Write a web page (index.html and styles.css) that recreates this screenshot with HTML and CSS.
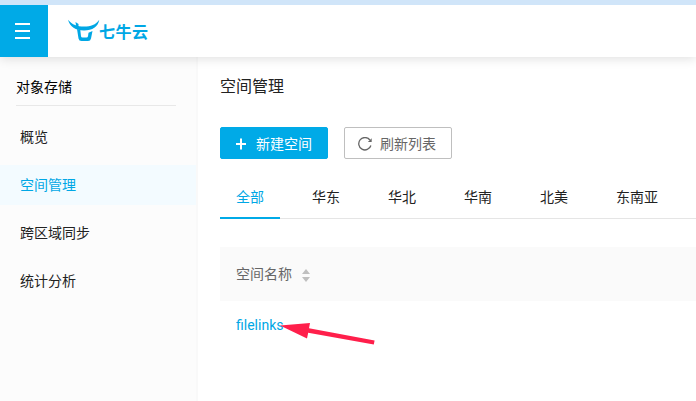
FILE: index.html
```html
<!DOCTYPE html>
<html lang="zh-CN">
<head>
<meta charset="utf-8">
<title>空间管理</title>
<link rel="stylesheet" href="styles.css">
</head>
<body>
<header class="header">
  <button class="menu-button" aria-label="菜单">
    <svg width="16" height="16" viewBox="0 0 16 16"><path d="M0 1h15M0 8h15M0 15h15" stroke="#fff" stroke-width="2"/></svg>
  </button>
  <div class="logo">
    <svg width="32" height="23" viewBox="0 0 32 23" fill="#00a7e5">
      <path d="M0 .8C4.500 6 9 7.600 16 7.600S27.500 6 31.300 .8C30 8 24.500 11.500 16 11.500S2 8 0 .8Z"/>
      <path d="M7.500 3L10.500 5V10L8.500 9.500Z"/>
      <path d="M9 10L12.300 11L13 17.300Q13.200 18.600 14.500 18.600H18.500Q19.700 18.600 20 17.300L20.500 13.800L24.500 12L23 19.500Q22.500 22 20 22H13.500Q11 22 10.500 19.500Z"/>
    </svg>
    <span class="logo-text">七牛云</span>
  </div>
</header>
<div class="layout">
  <aside class="sidebar">
    <div class="product">对象存储</div>
    <nav class="nav">
      <a class="nav-item">概览</a>
      <a class="nav-item active">空间管理</a>
      <a class="nav-item">跨区域同步</a>
      <a class="nav-item">统计分析</a>
    </nav>
  </aside>
  <main class="content">
    <h1 class="title">空间管理</h1>
    <div class="actions">
      <button class="button primary">
        <svg width="12" height="12" viewBox="0 0 12 12"><path d="M6 .5v11M1 6h10" stroke="#fff" stroke-width="2"/></svg>
        <span>新建空间</span>
      </button>
      <button class="button">
        <svg width="14" height="14" viewBox="0 0 14 14"><path d="M12.900 8.500A6.200 6.200 0 1 1 11.900 3" fill="none" stroke="#666" stroke-width="1.300"/><path d="M13.700 1.200V5H9.900Z" fill="#666"/></svg>
        <span>刷新列表</span>
      </button>
    </div>
    <nav class="tabs">
      <a class="tab active">全部</a>
      <a class="tab">华东</a>
      <a class="tab">华北</a>
      <a class="tab">华南</a>
      <a class="tab">北美</a>
      <a class="tab">东南亚</a>
    </nav>
    <div class="table">
      <div class="table-head">
        <span>空间名称</span>
        <svg class="sorter" width="8" height="13" viewBox="0 0 8 13" fill="#bfbfbf"><path d="M4 0L8 5H0ZM0 8H8L4 13Z"/></svg>
      </div>
      <div class="table-row"><a class="bucket">filelinks</a>
        <svg class="arrow" width="96" height="24" viewBox="0 0 96 24" fill="#ff1f4b"><path d="M0 4.500L30 2L29 7.200L94.600 19.500L93.800 23.500L28.200 11.800L27 17.500Z"/></svg>
      </div>
    </div>
  </main>
</div>
</body>
</html>
```
FILE: styles.css
```css
* { box-sizing: border-box; }

body {
  margin: 0;
  height: 401px;
  overflow: hidden;
  display: flex;
  flex-direction: column;
  border-top: 5px solid #d0e5f9;
  background: #fff;
  color: #222;
  font: 14px/20px Roboto, "Noto Sans CJK SC", sans-serif;
}

.header {
  position: relative;
  z-index: 1;
  flex: none;
  height: 52px;
  display: flex;
  background: #fff;
  box-shadow: 0 2px 10px rgba(0, 0, 0, .12);
}

.menu-button {
  width: 48px;
  padding: 0 0 0 15px;
  border: 0;
  display: flex;
  align-items: center;
  background: #00aae7;
}

.logo {
  display: flex;
  padding: 14px 0 0 20px;
  color: #00a7e5;
}

.logo-text {
  margin: 4px 0 0 -1px;
  font-size: 16px;
  font-weight: 700;
  letter-spacing: .5px;
}

.layout {
  flex: 1;
  display: flex;
}

.sidebar {
  flex: none;
  width: 198px;
  border-right: 2px solid #f9f9f9;
  background: #fcfcfc;
}

.product {
  height: 49px;
  margin: 0 20px 0 16px;
  padding-top: 20px;
  border-bottom: 1px solid #e8e8e8;
  color: #000;
}

.nav {
  display: flex;
  flex-direction: column;
  gap: 8px;
  padding-top: 11px;
}

.nav-item {
  height: 40px;
  padding-left: 20px;
  line-height: 40px;
}

.nav-item.active {
  background: #f3fbff;
  color: #00a7e5;
}

.content {
  flex: 1;
  min-width: 0;
  padding: 18px 0 0 22px;
}

.title {
  margin: 0 0 28px;
  font-size: 16px;
  font-weight: 400;
  line-height: 24px;
}

.actions {
  display: flex;
  gap: 16px;
}

.button {
  width: 108px;
  height: 32px;
  padding: 0 0 0 13px;
  display: flex;
  align-items: center;
  gap: 8px;
  border: 1px solid #bfbfbf;
  border-radius: 2px;
  background: #fff;
  color: #666;
  font: inherit;
}

.button.primary {
  padding-left: 14px;
  gap: 9px;
  border-color: #00aae7;
  background: #00aae7;
  color: #fff;
}

.button span { padding-top: 1px; }

.button svg { margin-top: 2px; }

.tabs {
  height: 60px;
  display: flex;
  gap: 16px;
  border-bottom: 1px solid #e5e5e5;
}

.tab {
  flex: none;
  height: 60px;
  padding: 28px 16px 0;
}

.tab.active {
  border-bottom: 2px solid #00aae7;
  color: #00a7e5;
}

.table { margin-top: 28px; }

.table-head {
  height: 54px;
  padding-left: 16px;
  display: flex;
  align-items: center;
  gap: 10px;
  background: #fafafa;
  color: #666;
}

.sorter { margin-top: 3px; }

.table-row {
  position: relative;
  padding: 14px 16px;
}

.bucket { color: #00a7e5; }

.arrow {
  position: absolute;
  left: 60px;
  top: 20px;
}
```
